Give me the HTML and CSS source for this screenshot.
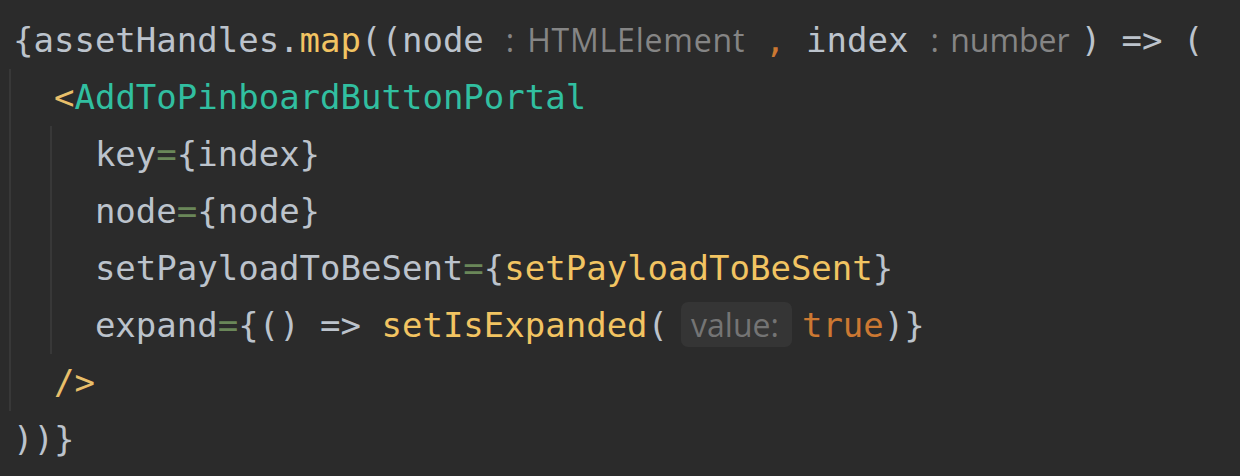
FILE: index.html
```html
<!DOCTYPE html>
<html lang="en">
<head>
  <meta charset="UTF-8">
  <title>assetHandles.map</title>
  <meta name="viewport" content="width=device-width, initial-scale=1.0">
  <link rel="stylesheet" href="styles.css">
</head>
<body>
  <div class="editor">
    <div class="line">{assetHandles.<span class="fn">map</span>((node<span class="hint hint-wide">: HTMLElement</span><span class="kw">,</span> index<span class="hint">: number</span>) =&gt; (</div>

    <!-- JSX element, with indent guides -->
    <div class="guide">
      <div class="line">  <span class="tag">&lt;</span><span class="comp">AddToPinboardButtonPortal</span></div>
      <div class="guide inner">
        <div class="line">  key<span class="eq">=</span>{index}</div>
        <div class="line">  node<span class="eq">=</span>{node}</div>
        <div class="line">  setPayloadToBeSent<span class="eq">=</span>{<span class="fn">setPayloadToBeSent</span>}</div>
        <div class="line">  expand<span class="eq">=</span>{() =&gt; <span class="fn">setIsExpanded</span>(<span class="hint boxed">value:</span><span class="kw">true</span>)}</div>
      </div>
      <div class="line">  <span class="tag">/&gt;</span></div>
    </div>

    <div class="line">))}</div>
  </div>
</body>
</html>
```

FILE: styles.css
```css
body {
  margin: 0;
  background: #2b2b2b;
}
.editor {
  font-family: 'DejaVu Sans Mono', 'Liberation Mono', monospace;
  font-size: 34px;
  color: #bcc3cc;
  padding: 12px 0 0 13px;
  height: 476px;
  box-sizing: border-box;
}
.line {
  height: 57px;
  line-height: 57px;
  white-space: pre;
}
.guide {
  margin-left: -4px;
  border-left: 2px solid #383838;
  padding-left: 2px;
}
.guide.inner { margin-left: calc(2ch - 4px); }

.fn { color: #f2c462; }
.kw { color: #cc7832; }
.tag { color: #e8bf6a; }
.comp { color: #31bfa0; }
.eq { color: #6a8759; }

/* inlay hints */
.hint {
  font-family: 'Open Sans', 'Liberation Sans', sans-serif;
  font-size: 32px;
  word-spacing: 3px;
  color: #858585;
  display: inline-block;
  line-height: 45px;
  margin-left: 10px;
  padding: 0 11px 0 12px;
  border-radius: 7px;
}
.hint-wide {
  letter-spacing: 0.8px;
  padding-right: 20px;
}
.hint.boxed {
  background: #353535;
  color: #747474;
  word-spacing: 0;
  margin: 0 10px 0 13px;
  padding: 0 13px 0 10px;
}
```
